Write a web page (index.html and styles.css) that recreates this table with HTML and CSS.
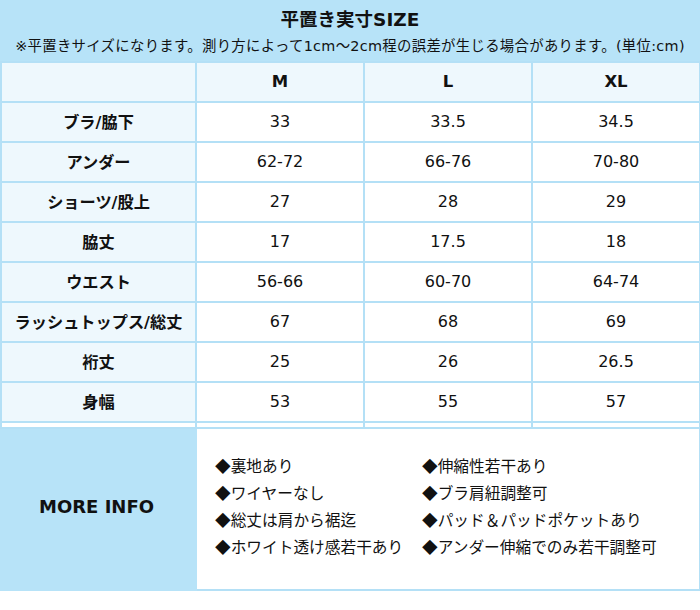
FILE: index.html
```html
<!DOCTYPE html>
<html lang="ja">
<head>
<meta charset="utf-8">
<title>平置き実寸SIZE</title>
<link rel="stylesheet" href="styles.css">
</head>
<body>
<div class="sheet">
  <div class="band">
    <h1 class="title">平置き実寸SIZE</h1>
    <p class="note">※平置きサイズになります。測り方によって1cm～2cm程の誤差が生じる場合があります。(単位:cm)</p>
  </div>
  <table class="size">
    <colgroup>
      <col class="c-label"><col class="c-val"><col class="c-val"><col class="c-val">
    </colgroup>
    <thead>
      <tr class="head"><th class="label"></th><th>M</th><th>L</th><th>XL</th></tr>
    </thead>
    <tbody>
      <tr><th class="label">ブラ/脇下</th><td>33</td><td>33.5</td><td>34.5</td></tr>
      <tr><th class="label">アンダー</th><td>62-72</td><td>66-76</td><td>70-80</td></tr>
      <tr><th class="label">ショーツ/股上</th><td>27</td><td>28</td><td>29</td></tr>
      <tr><th class="label">脇丈</th><td>17</td><td>17.5</td><td>18</td></tr>
      <tr><th class="label">ウエスト</th><td>56-66</td><td>60-70</td><td>64-74</td></tr>
      <tr><th class="label">ラッシュトップス/総丈</th><td>67</td><td>68</td><td>69</td></tr>
      <tr><th class="label">裄丈</th><td>25</td><td>26</td><td>26.5</td></tr>
      <tr><th class="label">身幅</th><td>53</td><td>55</td><td>57</td></tr>
      <tr class="gap"><td></td><td></td><td></td><td></td></tr>
      <tr class="info-row">
        <th class="more">MORE INFO</th>
        <td colspan="3" class="info">
          <div class="info-grid">
            <span><b class="dia">◆</b>裏地あり</span>
            <span><b class="dia">◆</b>伸縮性若干あり</span>
            <span><b class="dia">◆</b>ワイヤーなし</span>
            <span><b class="dia">◆</b>ブラ肩紐調整可</span>
            <span><b class="dia">◆</b>総丈は肩から裾迄</span>
            <span><b class="dia">◆</b>パッド＆パッドポケットあり</span>
            <span><b class="dia">◆</b>ホワイト透け感若干あり</span>
            <span><b class="dia">◆</b>アンダー伸縮でのみ若干調整可</span>
          </div>
        </td>
      </tr>
    </tbody>
  </table>
</div>
</body>
</html>
```

FILE: styles.css
```css
html, body {
  margin: 0;
  padding: 0;
  background: #ffffff;
}
body {
  font-family: "DejaVu Sans", "Noto Sans CJK JP", sans-serif;
  color: #111111;
}
.sheet {
  width: 700px;
}
.band {
  background: #b7e3f8;
  height: 61px;
  display: flex;
  flex-direction: column;
  align-items: center;
  padding-top: 9px;
  box-sizing: border-box;
}
.title {
  margin: 0;
  font-size: 18.5px;
  font-weight: bold;
  line-height: 22px;
  font-family: "DejaVu Sans", "Noto Sans CJK JP", sans-serif;
}
.note {
  margin: 4px 0 0;
  font-size: 14.4px;
  line-height: 22px;
  font-family: "DejaVu Sans", "Noto Sans CJK JP", sans-serif;
  letter-spacing: 0.3px;
  white-space: nowrap;
}
.size {
  width: 699px;
  border-collapse: collapse;
  table-layout: fixed;
}
.c-label { width: 195px; }
.c-val { width: 168px; }
.size th, .size td {
  border: 2px solid #b4e0f6;
  height: 36px;
  padding: 0 0 2px;
  text-align: center;
  font-size: 16px;
  vertical-align: middle;
}
.size td {
  font-weight: normal;
}
.size th {
  font-weight: bold;
}
.head th {
  background: #eef8fd;
  font-size: 16.5px;
}
.label {
  background: #eef8fd;
}
.size th.label {
  font-size: 16.2px;
}
.size tr.gap td {
  height: 4px;
  padding: 0;
  background: #ffffff;
}
.size tr.info-row th, .size tr.info-row td {
  height: 154px;
  padding-bottom: 6px;
}
.size th.more {
  background: #b7e3f8;
  border-color: #b7e3f8;
  font-size: 18px;
  padding-right: 4px;
  font-family: "DejaVu Sans", sans-serif;
}
.info {
  background: #ffffff;
  text-align: left;
}
.size td.info {
  text-align: left;
  padding-left: 18px;
}
.info-grid {
  display: grid;
  grid-template-columns: 207px auto;
  row-gap: 5px;
  font-family: "Noto Sans CJK JP", sans-serif;
  font-size: 15.7px;
  line-height: 22px;
  color: #111111;
}
.dia {
  font-weight: normal;
  font-family: "Noto Sans CJK JP", sans-serif;
}
```
